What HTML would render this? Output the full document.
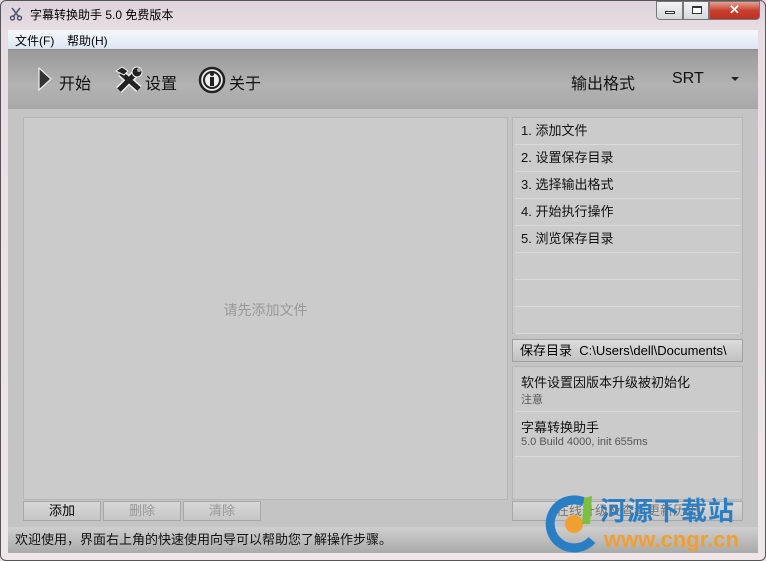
<!DOCTYPE html>
<html><head><meta charset="utf-8"><style>
*{margin:0;padding:0;box-sizing:border-box}
body{width:766px;height:561px;overflow:hidden;background:#e9dfe3;font-family:"Liberation Sans","Noto Sans CJK SC",sans-serif;position:relative}
.frame{position:absolute;left:0;top:0;width:766px;height:561px;border:1px solid #555;border-radius:6px;background:linear-gradient(#dcd3dc,#e8dde4 30px,#efe6ea)}
.title{position:absolute;left:30px;top:6px;font-size:12px;color:#000}
.caps{position:absolute;left:656px;top:1px;width:104px;height:19px;display:flex}
.cap{height:19px;border:1px solid #777;background:linear-gradient(#f3f3f5,#d6d8dc);}
.menu{position:absolute;left:8px;top:30px;width:750px;height:19px;background:linear-gradient(#f5f8fc,#dce6f2);font-size:12px;color:#000}
.menu span{position:absolute;top:2px}
.tool{position:absolute;left:8px;top:49px;width:750px;height:60px;background:linear-gradient(#9a9a9a,#b3b3b3 60%,#a8a8a8);border-top:1px solid #8a8a8a}
.tool .t{position:absolute;top:20px;font-size:16px;color:#111}
.main{position:absolute;left:8px;top:109px;width:750px;height:418px;background:#c4c4c4}
.list{position:absolute;left:15px;top:8px;width:485px;height:383px;background:#cbcbcb;border:1px solid #b5b5b5}
.btn{position:absolute;top:392px;height:20px;width:78px;border:1px solid #a8a8a8;background:linear-gradient(#d8d8d8,#c6c6c6);font-size:13px;text-align:center;line-height:18px}
.steps{position:absolute;left:504px;top:8px;width:231px;height:217px;background:#cbcbcb;border:1px solid #b5b5b5}
.steps div{height:27px;border-bottom:1px solid #dadada;margin:0 2px;padding-left:6px;font-size:13px;line-height:26px;color:#111}
.save{position:absolute;left:504px;top:230px;width:231px;height:23px;border:1px solid #a0a0a0;background:linear-gradient(#dcdcdc,#c2c2c2);font-size:13px;line-height:21px;padding-left:7px;white-space:nowrap;overflow:hidden}
.info{position:absolute;left:504px;top:257px;width:231px;height:134px;background:#cbcbcb;border:1px solid #b5b5b5}
.info .i{margin:0 2px;height:45px;border-bottom:1px solid #dadada;padding:5px 0 0 6px}
.i b{display:block;font-weight:normal;font-size:13px;color:#111}
.i s{display:block;text-decoration:none;font-size:11px;color:#555}
.status{position:absolute;left:8px;top:527px;width:750px;height:26px;background:linear-gradient(#cfcfcf,#aaaaaa);font-size:13px;line-height:26px;padding-left:7px;color:#111}
</style></head><body>
<div class="frame"></div>
<svg style="position:absolute;left:9px;top:7px" width="14" height="14" viewBox="0 0 14 14"><path d="M3 1L10 10M11 1L4 10" stroke="#556" stroke-width="1.5"/><circle cx="3.5" cy="11" r="2" fill="none" stroke="#446" stroke-width="1.3"/><circle cx="10.5" cy="11" r="2" fill="none" stroke="#446" stroke-width="1.3"/></svg>
<div class="title">字幕转换助手 5.0 免费版本</div>
<div class="caps">
<div class="cap" style="width:27px;border-radius:0 0 0 4px;position:relative"><div style="position:absolute;left:8px;top:9px;width:10px;height:3px;background:#fff;border:1px solid #333"></div></div>
<div class="cap" style="width:26px;position:relative"><div style="position:absolute;left:8px;top:4px;width:10px;height:8px;border:1px solid #333;border-top-width:2px;background:#fff"></div></div>
<div class="cap" style="width:51px;border-radius:0 0 4px 0;background:linear-gradient(#e8a090,#c84030 50%,#c03020);color:#fff;font-weight:bold;font-size:13px;text-align:center;line-height:16px">✕</div>
</div>
<div class="menu"><span style="left:7px">文件(F)</span><span style="left:59px">帮助(H)</span></div>
<div class="tool">
<svg style="position:absolute;left:30px;top:17px" width="14" height="24" viewBox="0 0 14 24"><path d="M1 1L13 12L1 23Z" fill="#333" stroke="#eee" stroke-width="1.2"/></svg>
<span class="t" style="left:51px">开始</span>
<svg style="position:absolute;left:106px;top:15px" width="30" height="28" viewBox="0 0 30 28"><path d="M5 25L21 9M7 8L25 24" stroke="#eee" stroke-width="8"/><path d="M5 25L21 9M7 8L25 24" stroke="#222" stroke-width="5"/><path d="M2 6L8 2L14 6L10 10Z" fill="#222" stroke="#eee"/><circle cx="23" cy="7" r="5" fill="#222" stroke="#eee"/><circle cx="25" cy="5" r="2" fill="#aaa"/></svg>
<span class="t" style="left:137px">设置</span>
<svg style="position:absolute;left:190px;top:16px" width="28" height="28" viewBox="0 0 28 28"><circle cx="14" cy="14" r="12" fill="#eee" stroke="#222" stroke-width="2.5"/><circle cx="14" cy="14" r="8" fill="none" stroke="#222" stroke-width="2"/><rect x="12" y="11" width="4" height="9" fill="#222"/><circle cx="14" cy="8" r="2" fill="#222"/></svg>
<span class="t" style="left:221px">关于</span>
<span class="t" style="left:563px">输出格式</span>
<span class="t" style="left:664px">SRT</span>
<span style="position:absolute;left:723px;top:27px;border:4px solid transparent;border-top:4px solid #222"></span>
</div>
<div class="main">
<div class="list"><div style="position:absolute;left:0;right:0;top:182px;text-align:center;font-size:14px;color:#999">请先添加文件</div></div>
<div class="btn" style="left:15px">添加</div>
<div class="btn" style="left:95px;color:#999">删除</div>
<div class="btn" style="left:175px;color:#999">清除</div>
<div class="steps"><div>1. 添加文件</div><div>2. 设置保存目录</div><div>3. 选择输出格式</div><div>4. 开始执行操作</div><div>5. 浏览保存目录</div><div></div><div></div><div></div></div>
<div class="save">保存目录&nbsp; C:\Users\dell\Documents\</div>
<div class="info"><div class="i"><b>软件设置因版本升级被初始化</b><s>注意</s></div><div class="i"><b>字幕转换助手</b><s>5.0 Build 4000, init 655ms</s></div></div>
<div class="btn" style="left:504px;width:231px;color:#777">在线升级及查看更新历史</div>
</div>
<div class="status">欢迎使用，界面右上角的快速使用向导可以帮助您了解操作步骤。</div>
<svg style="position:absolute;left:544px;top:494px" width="60" height="60" viewBox="0 0 60 60"><path d="M40 8A24 24 0 1 0 48 46" fill="none" stroke="#2a7fc4" stroke-width="9"/><circle cx="30" cy="30" r="9" fill="#f0a030"/><path d="M40 4L48 2L46 30L38 30Z" fill="#7cc040"/></svg>
<div style="position:absolute;left:600px;top:496px;font-size:26px;font-weight:bold;color:#2a7fc4;letter-spacing:1px;line-height:30px">河源下载站</div>
<div style="position:absolute;left:604px;top:528px;font-size:22px;font-weight:bold;color:#f0a030;line-height:24px">www.cngr.cn</div>
</body></html>
